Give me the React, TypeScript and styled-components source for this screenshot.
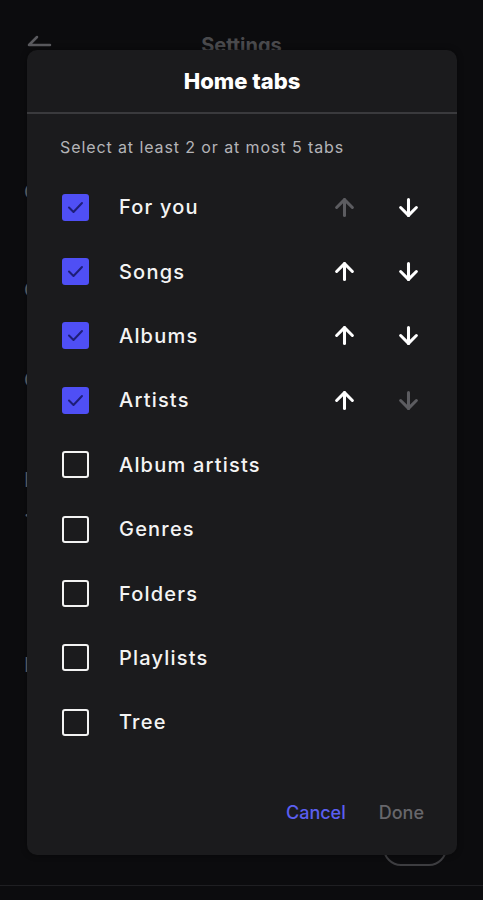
import React, { useState } from "react";
import styled, { createGlobalStyle } from "styled-components";
import { ArrowUp, ArrowDown } from "lucide-react";

const GlobalStyle = createGlobalStyle`
	body {
		margin: 0;
		background-color: #0c0c0e;
		font-family: Inter, "Noto Sans", sans-serif;
	}
`;

const Screen = styled.div`
	position: relative;
	width: 483px;
	height: 900px;
	overflow: hidden;
	background-color: #0c0c0e;
	display: flex;
	flex-direction: column;
`;

const Header = styled.header`
	height: 90px;
	display: flex;
	align-items: center;
	justify-content: center;
	position: relative;
	color: #4a4a4d;
	font-size: 20px;
	font-weight: 700;
`;

const Back = styled.span`
	position: absolute;
	left: 26px;
	top: 34px;
	display: flex;
	color: #5a5a5e;
`;

const BgList = styled.div`
	flex: 1;
	display: flex;
	flex-direction: column;
	padding-left: 24px;
	color: #6a6a6e;
	font-size: 20px;
`;

const BgItem = styled.div<{ $gap: number }>`
	margin-top: ${(p) => p.$gap}px;
	height: 24px;
	line-height: 24px;
`;

const BgFoot = styled.div`
	height: 48px;
	display: flex;
	justify-content: flex-end;
	align-items: flex-end;
	padding: 0 36px 19px 0;
	border-bottom: 1px solid #1f1f22;
`;

const Pill = styled.div`
	width: 60px;
	height: 34px;
	border: 2px solid #3d3d40;
	border-radius: 18px;
`;

const BottomBar = styled.div`
	height: 14px;
`;

const Dialog = styled.div`
	position: absolute;
	top: 50px;
	left: 27px;
	width: 430px;
	height: 805px;
	background-color: #1b1b1d;
	border-radius: 10px;
	display: flex;
	flex-direction: column;
	box-shadow: 0 0 6px rgba(0, 0, 0, 0.4);
`;

const Title = styled.h2`
	margin: 0;
	height: 62px;
	display: flex;
	align-items: center;
	justify-content: center;
	color: #ffffff;
	font-size: 22px;
	font-weight: 800;
	border-bottom: 2px solid #3a3a3d;
`;

const Body = styled.div`
	flex: 1;
	padding: 23px 0 0 33px;
	display: flex;
	flex-direction: column;
`;

const Hint = styled.p`
	margin: 0 0 18px;
	height: 20px;
	line-height: 20px;
	color: #b4b4b8;
	font-size: 16px;
	letter-spacing: 0.9px;
`;

const Row = styled.div`
	height: 64.4px;
	display: flex;
	align-items: center;
	padding-left: 2px;
`;

const Box = styled.span<{ $checked: boolean }>`
	width: 27px;
	height: 27px;
	box-sizing: border-box;
	border-radius: 3px;
	display: flex;
	align-items: center;
	justify-content: center;
	background-color: ${(p) => (p.$checked ? "#4f4ff5" : "transparent")};
	border: ${(p) => (p.$checked ? "none" : "2.5px solid #f2f2f2")};
`;

const Label = styled.span`
	margin-left: 30px;
	flex: 1;
	color: #f4f4f4;
	font-size: 20px;
	font-weight: 500;
	letter-spacing: 1.2px;
`;

const Move = styled.button<{ $off: boolean }>`
	width: 64px;
	display: flex;
	justify-content: center;
	background: none;
	border: none;
	padding: 0;
	color: ${(p) => (p.$off ? "#5c5c60" : "#ffffff")};
	cursor: pointer;
`;

const Arrows = styled.div`
	display: flex;
	margin-right: 17px;
`;

const Footer = styled.div`
	display: flex;
	justify-content: flex-end;
	align-items: flex-end;
	gap: 33px;
	padding: 0 33px 30px 0;
`;

const Action = styled.button<{ $muted?: boolean }>`
	background: none;
	border: none;
	padding: 0;
	font-family: inherit;
	font-size: 18px;
	font-weight: 500;
	line-height: 24px;
	color: ${(p) => (p.$muted ? "#67676b" : "#5b5ff0")};
	cursor: pointer;
`;

const tabs = [
	{ name: "For you", on: true },
	{ name: "Songs", on: true },
	{ name: "Albums", on: true },
	{ name: "Artists", on: true },
	{ name: "Album artists", on: false },
	{ name: "Genres", on: false },
	{ name: "Folders", on: false },
	{ name: "Playlists", on: false },
	{ name: "Tree", on: false },
];

const bgItems = [
	{ text: "Colors", gap: 90 },
	{ text: "Cover", gap: 74 },
	{ text: "Crossfade", gap: 66 },
	{ text: "Interface", gap: 76 },
	{ text: "·", gap: 11 },
	{ text: "Display", gap: 126 },
];

const App = () => {
	const [items, setItems] = useState(tabs);
	const active = items.filter((t) => t.on).length;

	const toggle = (i: number) =>
		setItems(items.map((t, j) => (j === i ? { ...t, on: !t.on } : t)));

	const move = (i: number, d: number) => {
		const next = [...items];
		[next[i], next[i + d]] = [next[i + d], next[i]];
		setItems(next);
	};

	return (
		<Screen>
			<GlobalStyle />
			<Header>
				<Back>
					<svg width="26" height="22" viewBox="0 0 26 22" fill="none" stroke="currentColor" strokeWidth="2.5" strokeLinecap="round">
						<path d="M24 11H3M11 3L3 11" />
					</svg>
				</Back>
				Settings
			</Header>
			<BgList>
				{bgItems.map((b) => (
					<BgItem key={b.text} $gap={b.gap}>
						{b.text}
					</BgItem>
				))}
			</BgList>
			<BgFoot>
				<Pill />
			</BgFoot>
			<BottomBar />

			<Dialog>
				<Title>Home tabs</Title>
				<Body>
					<Hint>Select at least 2 or at most 5 tabs</Hint>
					{items.map((t, i) => (
						<Row key={t.name}>
							<Box $checked={t.on} onClick={() => toggle(i)}>
								{t.on && (
									<svg width="17" height="13" viewBox="0 0 17 13" fill="none" stroke="#1e1e78" strokeWidth="2" strokeLinecap="round" strokeLinejoin="round">
										<path d="M2 6.5L6.5 11L15 2" />
									</svg>
								)}
							</Box>
							<Label>{t.name}</Label>
							{t.on && (
								<Arrows>
									<Move $off={i === 0} onClick={() => i > 0 && move(i, -1)}>
										<ArrowUp size={27} strokeWidth={2.7} />
									</Move>
									<Move $off={i === active - 1} onClick={() => i < active - 1 && move(i, 1)}>
										<ArrowDown size={27} strokeWidth={2.7} />
									</Move>
								</Arrows>
							)}
						</Row>
					))}
				</Body>
				<Footer>
					<Action>Cancel</Action>
					<Action $muted>Done</Action>
				</Footer>
			</Dialog>
		</Screen>
	);
};

export default App;
